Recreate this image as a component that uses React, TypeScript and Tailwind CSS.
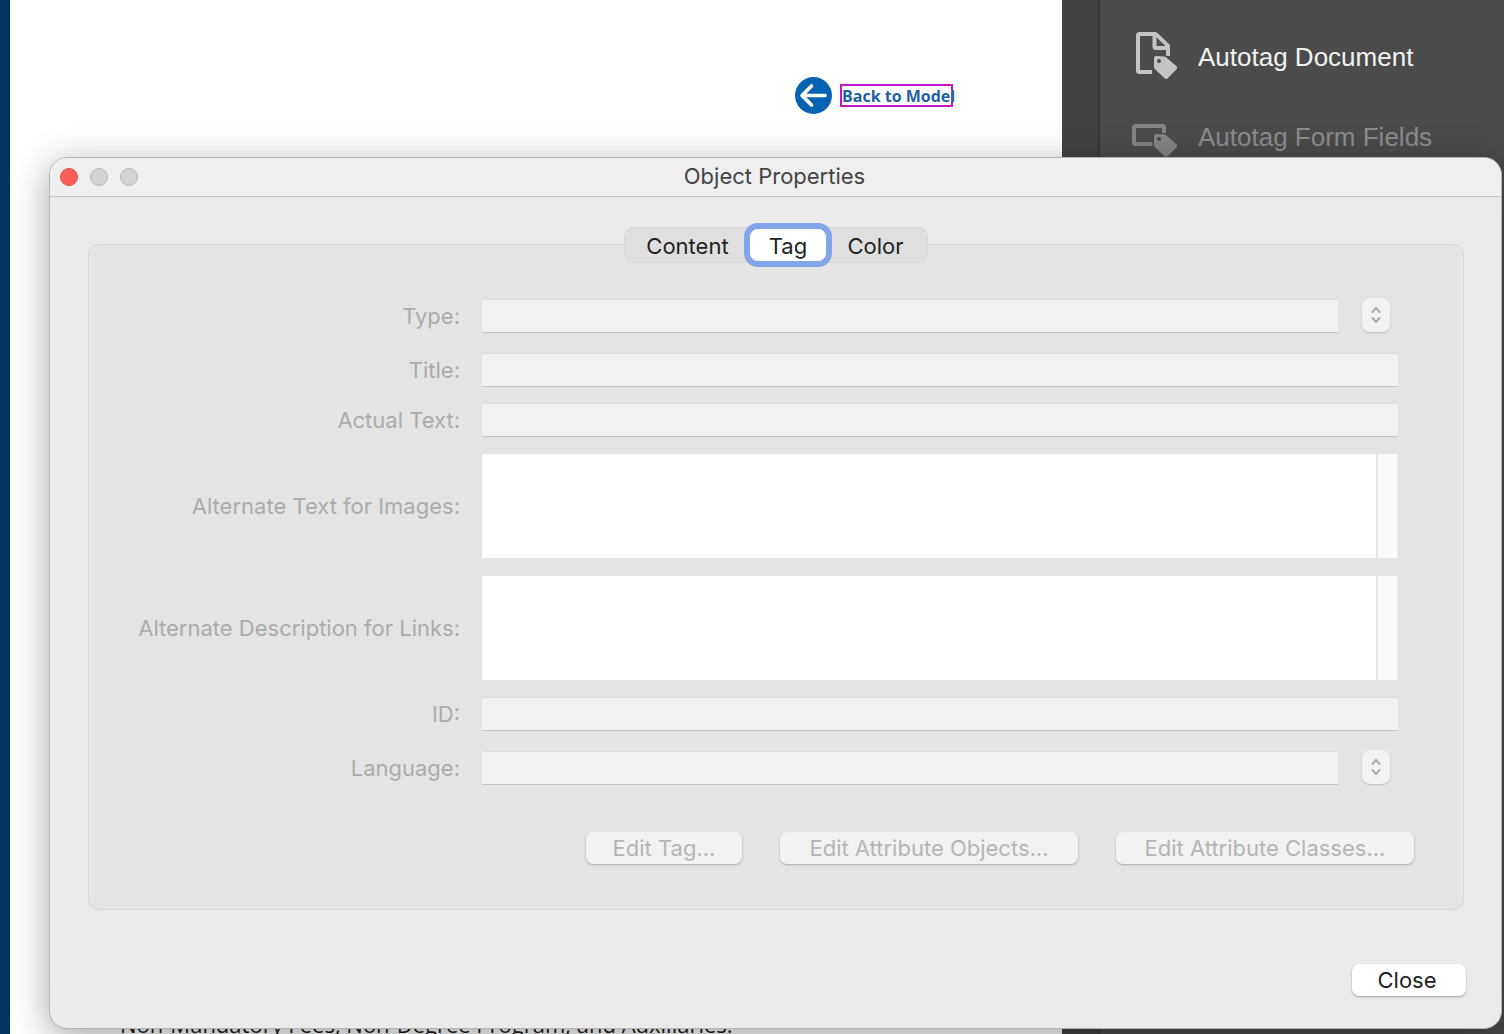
import type { ReactNode } from 'react'

const tools = [
	{
		name: 'Autotag Document',
		disabled: false,
		icon: (
			<svg className="h-12 w-12" viewBox="0 0 48 48" fill="none">
				<path
					d="M22 40H9.500a1.500 1.500 0 0 1-1.500-1.500v-35A1.500 1.500 0 0 1 9.500 2h15.700a1.500 1.500 0 0 1 1 .400L37.600 13.300a1.500 1.500 0 0 1 .400 1V24"
					stroke="#c4c4c4"
					strokeWidth="4"
				/>
				<path d="M24.500 3v11.500a1.500 1.500 0 0 0 1.500 1.500h12" stroke="#c4c4c4" strokeWidth="4" />
				<path
					d="M24 26a2 2 0 0 1 2-2l8.500.500a3 3 0 0 1 1.600.700L46.200 34a2.400 2.400 0 0 1 0 3.600l-8.400 8.600a2.300 2.300 0 0 1-3.200.100l-9.800-9.300a3 3 0 0 1-.800-1.900z"
					fill="#c4c4c4"
					stroke="#4b4b4b"
					strokeWidth="3"
					paintOrder="stroke"
				/>
				<circle cx="29" cy="29" r="2" fill="#4b4b4b" />
			</svg>
		),
	},
	{
		name: 'Autotag Form Fields',
		disabled: true,
		icon: (
			<svg className="h-12 w-12" viewBox="0 0 48 48" fill="none">
				<path
					d="M24 32H5.500A1.500 1.500 0 0 1 4 30.500v-15A1.500 1.500 0 0 1 5.500 14h27a1.500 1.500 0 0 1 1.500 1.500V24"
					stroke="#858585"
					strokeWidth="4"
				/>
				<path
					d="M24 24a2 2 0 0 1 2-2l8.500.500a3 3 0 0 1 1.600.700L46.200 32a2.400 2.400 0 0 1 0 3.600l-8.400 8.600a2.300 2.300 0 0 1-3.200.100l-9.800-9.300a3 3 0 0 1-.800-1.900z"
					fill="#858585"
					stroke="#4b4b4b"
					strokeWidth="3"
					paintOrder="stroke"
				/>
				<circle cx="29" cy="27" r="2" fill="#4b4b4b" />
			</svg>
		),
	},
]

function Row({ id, label, children }: { id: string; label: string; children: ReactNode }) {
	return (
		<div className="flex items-center gap-[22px]">
			<label htmlFor={id} className="w-[371px] shrink-0 text-right text-[#ababab]">
				{label}
			</label>
			{children}
		</div>
	)
}

function TextField({ id }: { id: string }) {
	return (
		<input
			id={id}
			type="text"
			disabled
			className="h-[34px] min-w-0 flex-1 border-t border-b border-t-[#dcdcdc] border-b-[#c4c4c4] bg-[#f1f1f1] px-2"
		/>
	)
}

// text field with the little pop-up menu button beside it
function ComboField({ id, label }: { id: string; label: string }) {
	return (
		<div className="flex h-[42px] min-w-0 flex-1 items-center">
			<TextField id={id} />
			<div className="relative mr-2 ml-6 h-9 w-7">
				<select
					aria-label={label}
					disabled
					className="h-[34px] w-7 appearance-none rounded-lg bg-[#f2f2f2] opacity-100 shadow-[0_1px_2px_rgba(0,0,0,0.15)]"
				/>
				<svg
					className="pointer-events-none absolute top-2 left-2 h-[18px] w-3"
					viewBox="0 0 12 18"
					fill="none"
					stroke="#aaa"
					strokeWidth="2"
					strokeLinecap="round"
					strokeLinejoin="round"
				>
					<path d="M2.500 6L6 2l3.500 4M2.500 12L6 16l3.500-4" />
				</svg>
			</div>
		</div>
	)
}

function TextArea({ id }: { id: string }) {
	return (
		<div className="flex h-[106px] min-w-0 flex-1 py-px">
			<textarea id={id} disabled className="min-w-0 flex-1 resize-none bg-white p-2" />
			<div className="w-[22px] border-r border-l-2 border-r-[#eee] border-l-[#e8e8e8] bg-[#fafafa]" />
		</div>
	)
}

function EditButton({ wide, children }: { wide?: boolean; children: ReactNode }) {
	return (
		<button
			disabled
			className={`${wide ? 'w-[298px]' : 'w-[156px]'} h-8 rounded-[7px] bg-[#f2f2f2] text-[#b5b5b5] shadow-[0_1px_2px_rgba(0,0,0,0.25)]`}
		>
			{children}
		</button>
	)
}

function ObjectProperties() {
	return (
		<div
			role="dialog"
			aria-labelledby="dialog-title"
			className="absolute top-[157px] right-[2px] left-[49px] rounded-[18px] border border-[#b4b4b4] bg-[#ebebeb] font-[Inter,sans-serif] text-[22px] leading-7 shadow-[0_8px_36px_rgba(0,0,0,0.36)]"
		>
			<header className="flex h-[39px] items-center rounded-t-[17px] border-b border-[#c6c6c6] bg-[#efefef] px-[10px]">
				<div className="flex gap-3">
					<button aria-label="Close window" className="h-[18px] w-[18px] rounded-full border border-[#dd4a41] bg-[#fc5f57]" />
					<button aria-label="Minimize" disabled className="h-[18px] w-[18px] rounded-full border border-[#b9b9b9] bg-[#d3d3d3]" />
					<button aria-label="Zoom" disabled className="h-[18px] w-[18px] rounded-full border border-[#b9b9b9] bg-[#d3d3d3]" />
				</div>
				<h1 id="dialog-title" className="flex-1 pr-20 pb-0.5 text-center text-[#444]">
					Object Properties
				</h1>
			</header>

			<main className="pt-[30px] pr-[37px] pb-8 pl-[38px]">
				<div className="relative z-10 -mb-[19px] flex justify-center">
					<div role="tablist" className="flex h-9 items-center rounded-[10px] border border-[#d7d7d7] bg-[#dfdfdf] text-[#222]">
						<button role="tab" className="w-[119px] pt-0.5 pl-1.5">
							Content
						</button>
						<button
							role="tab"
							aria-selected
							className="h-11 w-[88px] rounded-[14px] border-[6px] border-[#82a4e8] bg-white pt-0.5"
						>
							Tag
						</button>
						<button role="tab" className="w-[95px] pt-0.5 pr-2">
							Color
						</button>
					</div>
				</div>

				<form className="rounded-[10px] border border-[#d8d8d8] bg-[#e4e4e4] pt-[50px] pb-[45px]">
					<div className="flex flex-col gap-4 pr-[65px]">
						<Row id="type" label="Type:">
							<ComboField id="type" label="Type options" />
						</Row>
						<Row id="title" label="Title:">
							<TextField id="title" />
						</Row>
						<Row id="actual-text" label="Actual Text:">
							<TextField id="actual-text" />
						</Row>
						<Row id="alt-text" label="Alternate Text for Images:">
							<TextArea id="alt-text" />
						</Row>
						<Row id="alt-description" label="Alternate Description for Links:">
							<TextArea id="alt-description" />
						</Row>
						<Row id="tag-id" label="ID:">
							<TextField id="tag-id" />
						</Row>
						<Row id="language" label="Language:">
							<ComboField id="language" label="Language options" />
						</Row>
					</div>
					<div className="mt-[43px] flex justify-end gap-[38px] pr-[49px]">
						<EditButton>Edit Tag...</EditButton>
						<EditButton wide>Edit Attribute Objects...</EditButton>
						<EditButton wide>Edit Attribute Classes...</EditButton>
					</div>
				</form>

				<div className="mt-[54px] -mr-[2px] flex justify-end">
					<button className="h-8 w-[114px] rounded-[7px] bg-white pr-1 text-[#222] shadow-[0_1px_2px_rgba(0,0,0,0.35)]">
						Close
					</button>
				</div>
			</main>
		</div>
	)
}

export default function App() {
	return (
		<div className="relative flex h-screen overflow-hidden bg-white">
			<div className="w-[10px] shrink-0 bg-[#003461]" />

			<div className="flex min-w-0 flex-1 flex-col justify-between font-['Open_Sans',sans-serif]">
				<div className="flex items-center justify-end gap-2 pt-[77px] pr-[109px]">
					<svg className="h-[37px] w-[37px]" viewBox="0 0 37 37" fill="none">
						<circle cx="18.500" cy="18.500" r="18.500" fill="#0563b1" />
						<path
							d="M30 18.500H7.500M16.500 9L7 18.500l9.500 9.500"
							stroke="#fff"
							strokeWidth="3.600"
							strokeLinecap="round"
							strokeLinejoin="round"
						/>
					</svg>
					<a
						href="#model"
						className="w-[113px] border-2 border-[#c416c4] pt-px text-[16px] leading-[18px] font-bold whitespace-nowrap text-[#1f5fa6]"
					>
						Back to Model
					</a>
				</div>
				<p className="-mb-[4px] pl-[110px] text-[22px] leading-7 whitespace-nowrap text-[#1a1a1a]">
					Non-Mandatory Fees, Non-Degree Program, and Auxiliaries.
				</p>
			</div>

			<div className="w-[38px] shrink-0 border-r-2 border-[#3a3a3a] bg-[#424242]" />

			<aside className="flex w-[404px] shrink-0 flex-col gap-8 bg-[#4b4b4b] pt-8 pl-[30px] font-['Liberation_Sans',sans-serif] text-[26px] leading-8">
				{tools.map((tool) => (
					<button
						key={tool.name}
						disabled={tool.disabled}
						className="flex items-center gap-5 text-left text-[#f2f2f2] disabled:text-[#8c8c8c]"
					>
						{tool.icon}
						<span className="pt-0.5">{tool.name}</span>
					</button>
				))}
			</aside>

			<ObjectProperties />
		</div>
	)
}
